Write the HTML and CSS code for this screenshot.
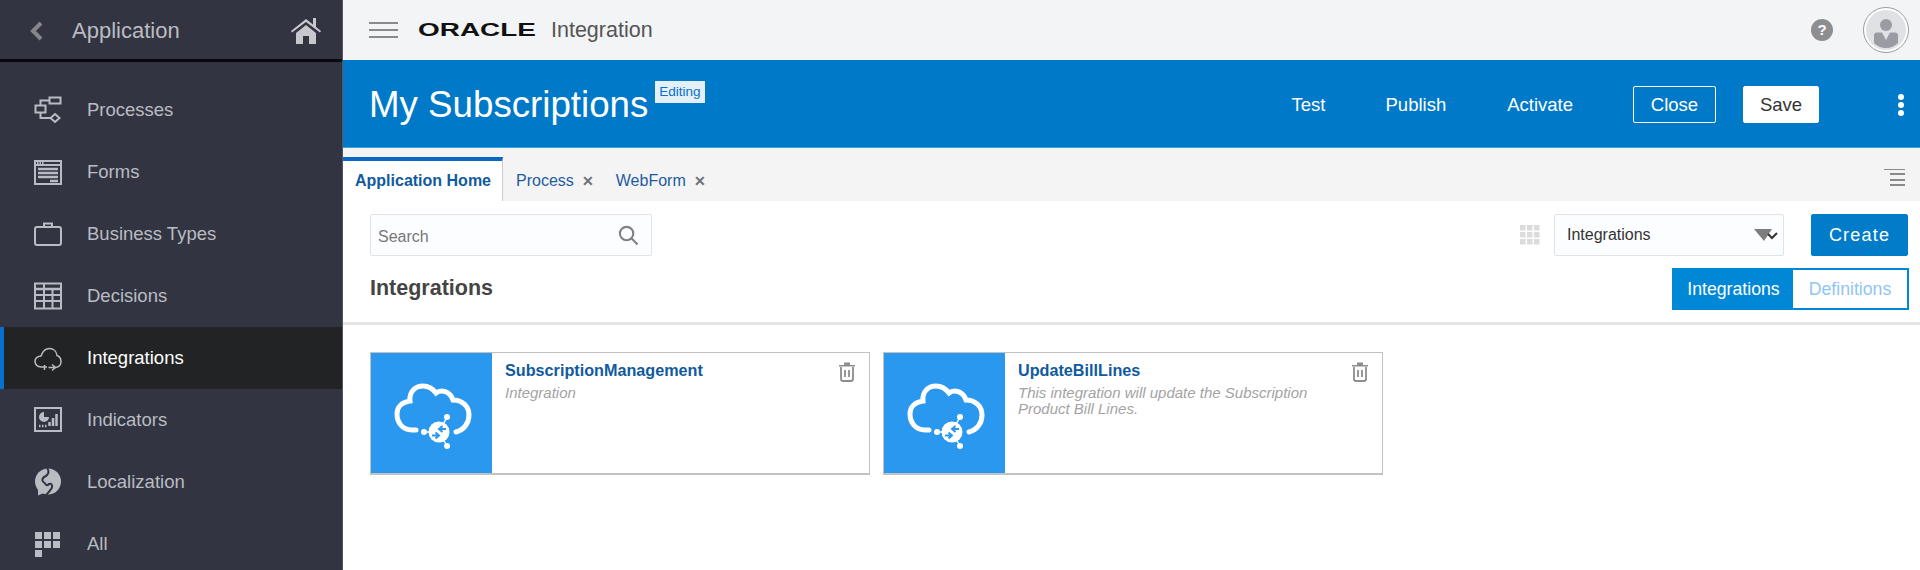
FILE: index.html
```html
<!DOCTYPE html>
<html lang="en">
<head>
    <meta charset="UTF-8">
    <title>My Subscriptions</title>
    <link rel="stylesheet" href="styles.css">
</head>
<body>
<div class="app">
    <aside class="sidebar">
        <div class="sidebar-head">
            <svg class="back" viewBox="0 0 14 20"><path d="M11 2 L3 10 L11 18" /></svg>
            <span class="sidebar-title">Application</span>
            <svg class="home" viewBox="0 0 30 27"><path d="M0 14 L15 2 L22 7.500 V1 H25 V10 L30 14 L29 15.500 L15 5 L1 15.500 Z" /><path d="M5 16 L15 8 L25 16 V27 H18 V19 H12 V27 H5 Z" /></svg>
        </div>
        <nav class="nav">
            <a class="nav-item">
                <svg class="nav-icon line" viewBox="0 0 28 28"><rect x="15.500" y="1.500" width="11" height="6" /><rect x="1.500" y="9.500" width="10" height="7" /><path d="M15.500 4.500 H6.500 V9.500 M6.500 16.500 V22 H16" /><path d="M21 18 L25.500 22 L21 26 L16.500 22 Z" /></svg>
                Processes
            </a>
            <a class="nav-item">
                <svg class="nav-icon line" viewBox="0 0 28 28"><rect x="1" y="3" width="26" height="23" /><path d="M1 7 H27" /><path d="M3 5 H10" stroke-dasharray="1.500 1" /><path class="thick" d="M4 11 H24 M4 15 H24 M4 19 H24 M16 23 H24" /></svg>
                Forms
            </a>
            <a class="nav-item">
                <svg class="nav-icon line" viewBox="0 0 28 28"><rect x="1" y="7" width="26" height="18" rx="2" /><path d="M10 7 V3.500 H18 V7" /></svg>
                Business Types
            </a>
            <a class="nav-item">
                <svg class="nav-icon line" viewBox="0 0 28 28"><rect x="1" y="1.500" width="26" height="25" /><path class="thick" d="M1 7 H27" /><path d="M1 13 H27 M1 19 H27 M10 1.500 V26.500 M18.500 7 V26.500" /></svg>
                Decisions
            </a>
            <a class="nav-item active">
                <svg class="nav-icon line thin" viewBox="0 0 28 28"><path d="M7 23 C3.500 23 1 20.500 1 17.500 C1 14.500 3.500 12.500 7 12 C8.500 7.500 11.500 4.500 15.500 4.500 C19.500 4.500 22.500 7.500 23 11.500 C25.500 12.500 27 15 27 17.500 C27 20.500 25 23 21.500 23.500" /><path d="M7 23 H13 M10.500 21 V26 M14.500 23.500 H21 M18 20.500 L21.500 23.500 L18 26.500" /></svg>
                Integrations
            </a>
            <a class="nav-item">
                <svg class="nav-icon line" viewBox="0 0 28 28"><rect x="1" y="2" width="26" height="23" /><path class="solid" d="M10 6 A5 5 0 1 0 15 11 H10 Z" /><path class="thick" d="M5 20 H6.500 M8 20 H9.500 M11 20 H12.500 M15.500 20 V16 M19 20 V12 M22.500 20 V8" /></svg>
                Indicators
            </a>
            <a class="nav-item">
                <svg class="nav-icon" viewBox="0 0 28 28"><circle cx="14" cy="13.500" r="13" /><path d="M4 20 L4 27.500 L12 24 Z" /><path class="gap" d="M13 0 C16 4 14 7 11 8.500 C8 10 7.500 13 10 14.500 C12 16 12.500 19 15 16 C18 14.500 19 19 17 21 C16 23 14 25 12 27" /></svg>
                Localization
            </a>
            <a class="nav-item">
                <svg class="nav-icon" viewBox="0 0 28 28"><rect x="1" y="2" width="7" height="7" /><rect x="10" y="2" width="7" height="7" /><rect x="19" y="2" width="7" height="7" /><rect x="1" y="11" width="7" height="7" /><rect x="10" y="11" width="7" height="7" /><rect x="19" y="11" width="7" height="7" /><rect x="1" y="20" width="7" height="7" /></svg>
                All
            </a>
        </nav>
    </aside>

    <main class="main">
        <header class="topbar">
            <div class="burger"><span></span><span></span><span></span></div>
            <span class="logo">ORACLE</span>
            <span class="product">Integration</span>
            <span class="help">?</span>
            <div class="avatar">
                <svg viewBox="0 0 46 46"><circle cx="23" cy="23" r="22.500" fill="#fff" stroke="#9a9a9a" /><circle cx="23" cy="23" r="20" fill="#dfe1e5" /><circle cx="23" cy="18" r="6" fill="#9a9ba3" /><path d="M11 28 Q11 26 14 25.500 L19 25.500 L23 33 L27 25.500 L32 25.500 Q35 26 35 28 V36 Q30 41 23 41 Q16 41 11 36 Z" fill="#9a9ba3" /></svg>
            </div>
        </header>

        <section class="band">
            <h1 class="page-title">My Subscriptions</h1>
            <span class="badge">Editing</span>
            <div class="actions">
                <a class="action">Test</a>
                <a class="action">Publish</a>
                <a class="action">Activate</a>
                <button class="btn-close">Close</button>
                <button class="btn-save">Save</button>
                <div class="dots"><span></span><span></span><span></span></div>
            </div>
        </section>

        <div class="tabs">
            <a class="tab tab-active">Application Home</a>
            <a class="tab">Process <i class="tab-x">&#10005;</i></a>
            <a class="tab">WebForm <i class="tab-x">&#10005;</i></a>
            <div class="tabs-menu"><span></span><span></span><span></span><span></span></div>
        </div>

        <section class="panel">
            <div class="toolbar">
                <div class="search">
                    <span>Search</span>
                    <svg viewBox="0 0 22 22"><circle cx="9" cy="9" r="7" /><path d="M14 14 L20.500 20.500" /></svg>
                </div>
                <div class="toolbar-right">
                    <svg class="grid-icon" viewBox="0 0 20 20"><path d="M0 0h5.500v5.500H0z M7 0h5.500v5.500H7z M14 0h5.500v5.500H14z M0 7h5.500v5.500H0z M7 7h5.500v5.500H7z M14 7h5.500v5.500H14z M0 14h5.500v5.500H0z M7 14h5.500v5.500H7z M14 14h5.500v5.500H14z" /></svg>
                    <div class="select">
                        <span>Integrations</span>
                        <svg viewBox="0 0 24 14"><path d="M0 1 H18 L10 13 Z" fill="#7d7d7d" /><path d="M14 6 L18 10 L23 5" fill="none" stroke="#333" stroke-width="2" /></svg>
                    </div>
                    <button class="btn-create">Create</button>
                </div>
            </div>
            <div class="section-row">
                <h2 class="section-title">Integrations</h2>
                <div class="toggle">
                    <span class="toggle-on">Integrations</span>
                    <span class="toggle-off">Definitions</span>
                </div>
            </div>
        </section>

        <section class="cards">
            <article class="card">
                <div class="card-icon">
                    <svg viewBox="-11 -27 121 121"><path class="cloud" d="M34 50 H30 C20 50 15 42 15 34 C15 27 20 22 28 21 C27 12 33 6 41 6 C47 6 51 9 54 13 C59 9 68 11 71 20 C80 20 87 26 87 35 C87 43 82 50 74 52" /><path class="spoke" d="M42 52 H50 M65 37 L57 52 L65 66" /><circle class="node" cx="57" cy="52" r="10.500" /><circle class="node" cx="42" cy="52" r="3" /><circle class="node" cx="65" cy="37" r="3" /><circle class="node" cx="65" cy="66" r="3" /><path class="arrow" d="M64 49 H58 M60.500 46 L57 49 L60.500 52 M50 55.500 H56 M53.500 52.500 L57 55.500 L53.500 58.500" /></svg>
                </div>
                <div class="card-body">
                    <h3 class="card-title">SubscriptionManagement</h3>
                    <p class="card-desc">Integration</p>
                </div>
                <svg class="trash" viewBox="0 0 18 21"><path d="M1 4 H17 V5.500 H1 Z M6 4 V1.500 H12 V4 Z" class="lid" /><path d="M3 6 V18 Q3 20 5 20 H13 Q15 20 15 18 V6 M7 9 V16 M11 9 V16" /></svg>
            </article>
            <article class="card">
                <div class="card-icon">
                    <svg viewBox="-11 -27 121 121"><path class="cloud" d="M34 50 H30 C20 50 15 42 15 34 C15 27 20 22 28 21 C27 12 33 6 41 6 C47 6 51 9 54 13 C59 9 68 11 71 20 C80 20 87 26 87 35 C87 43 82 50 74 52" /><path class="spoke" d="M42 52 H50 M65 37 L57 52 L65 66" /><circle class="node" cx="57" cy="52" r="10.500" /><circle class="node" cx="42" cy="52" r="3" /><circle class="node" cx="65" cy="37" r="3" /><circle class="node" cx="65" cy="66" r="3" /><path class="arrow" d="M64 49 H58 M60.500 46 L57 49 L60.500 52 M50 55.500 H56 M53.500 52.500 L57 55.500 L53.500 58.500" /></svg>
                </div>
                <div class="card-body">
                    <h3 class="card-title">UpdateBillLines</h3>
                    <p class="card-desc">This integration will update the Subscription Product Bill Lines.</p>
                </div>
                <svg class="trash" viewBox="0 0 18 21"><path d="M1 4 H17 V5.500 H1 Z M6 4 V1.500 H12 V4 Z" class="lid" /><path d="M3 6 V18 Q3 20 5 20 H13 Q15 20 15 18 V6 M7 9 V16 M11 9 V16" /></svg>
            </article>
        </section>
    </main>
</div>
</body>
</html>
```

FILE: styles.css
```css
* {
    box-sizing: border-box;
}

html, body {
    margin: 0;
    height: 100%;
    overflow: hidden;
    font-family: "Liberation Sans", Arial, sans-serif;
    background-color: #fff;
}

.app {
    display: flex;
    height: 570px;
}

/* sidebar */
.sidebar {
    width: 343px;
    flex-shrink: 0;
    background-color: #323441;
    border-right: 1px solid #55565f;
    color: #b9bcc2;
}

.sidebar-head {
    display: flex;
    align-items: center;
    height: 62px;
    padding: 2px 21px 0 30px;
    border-bottom: 3px solid #08090c;
}

.back {
    width: 14px;
    height: 20px;
    fill: none;
    stroke: #85868c;
    stroke-width: 4;
}

.sidebar-title {
    flex-grow: 1;
    margin-left: 28px;
    font-size: 22px;
    color: #babcc2;
}

.home {
    width: 30px;
    height: 27px;
    fill: #c6c8cd;
}

.nav {
    padding-top: 17px;
}

.nav-item {
    display: flex;
    align-items: center;
    height: 62px;
    padding-left: 34px;
    font-size: 18.500px;
}

.nav-item.active {
    background-color: #222324;
    color: #fff;
    border-left: 4px solid #0572ce;
    padding-left: 30px;
}

.nav-icon {
    width: 28px;
    height: 28px;
    margin-right: 25px;
    fill: #b9bcc2;
}

.nav-icon.line {
    fill: none;
    stroke: #b9bcc2;
    stroke-width: 2;
}

.nav-icon.thin {
    stroke-width: 1.500;
}

.nav-icon .thick {
    stroke-width: 2.500;
}

.nav-icon .solid {
    fill: #b9bcc2;
    stroke: none;
}

.nav-icon .gap {
    fill: none;
    stroke: #323441;
    stroke-width: 2;
}

/* top bar */
.main {
    flex-grow: 1;
    min-width: 0;
}

.topbar {
    display: flex;
    align-items: center;
    height: 60px;
    padding: 0 11px 0 26px;
    background-color: #f3f4f6;
}

.burger {
    display: flex;
    flex-direction: column;
    gap: 5px;
    width: 29px;
}

.burger span {
    height: 2px;
    background-color: #8b8b8b;
}

.logo {
    width: 119px;
    margin-left: 20px;
    font-size: 19px;
    font-weight: 700;
    color: #111;
    transform: scaleX(1.470);
    transform-origin: left center;
}

.product {
    flex-grow: 1;
    margin-left: 14px;
    font-size: 21.500px;
    color: #555;
}

.help {
    width: 22px;
    height: 22px;
    border-radius: 50%;
    background-color: #8e8e92;
    color: #fff;
    font-size: 15px;
    font-weight: 700;
    line-height: 22px;
    text-align: center;
}

.avatar {
    width: 46px;
    height: 46px;
    margin-left: 30px;
}

/* blue band */
.band {
    display: flex;
    align-items: center;
    height: 88px;
    padding: 2px 16px 0 26px;
    background-color: #0079c8;
    border-bottom: 1px solid #3aa0e0;
    color: #fff;
}

.page-title {
    margin: 0;
    font-size: 36.700px;
    font-weight: 400;
}

.badge {
    align-self: flex-start;
    margin: 19px 0 0 7px;
    padding: 0 4px;
    height: 22px;
    background-color: #e4eff8;
    color: #0572ce;
    font-size: 13.500px;
    line-height: 22px;
}

.actions {
    display: flex;
    align-items: center;
    margin-left: auto;
    font-size: 18.500px;
}

.action {
    margin-right: 60px;
}

.action:nth-child(2) {
    margin-right: 61px;
}

.btn-close, .btn-save {
    width: 83px;
    height: 37px;
    padding: 0;
    border-radius: 2px;
    font-family: inherit;
    font-size: 18.500px;
}

.btn-close {
    background-color: transparent;
    border: 1px solid #fff;
    color: #fff;
}

.btn-save {
    width: 76px;
    margin-left: 27px;
    background-color: #fff;
    border: 1px solid #fff;
    color: #333;
}

.dots {
    display: flex;
    flex-direction: column;
    gap: 2px;
    margin-left: 79px;
}

.dots span {
    width: 6px;
    height: 6px;
    border-radius: 50%;
    background-color: #fff;
}

/* tabs */
.tabs {
    display: flex;
    align-items: flex-end;
    height: 53px;
    padding-right: 15px;
    background-color: #f4f4f5;
}

.tab {
    display: flex;
    align-items: center;
    height: 40px;
    margin-left: 13px;
    font-size: 16px;
    color: #1f5c9e;
}

.tab:nth-child(3) {
    margin-left: 22px;
}

.tab-active {
    width: 160px;
    height: 44px;
    margin-left: 0;
    padding-left: 12px;
    background-color: #fff;
    border-top: 4px solid #0a68c4;
    border-right: 1px solid #c9cbd0;
    font-weight: 700;
    color: #115a9e;
}

.tab-x {
    margin-left: 8px;
    font-size: 14px;
    font-style: normal;
    font-weight: 700;
    color: #6f7175;
}

.tabs-menu {
    display: flex;
    flex-direction: column;
    align-items: flex-end;
    gap: 3.500px;
    width: 21px;
    margin: 0 0 15px auto;
}

.tabs-menu span {
    width: 15px;
    height: 2px;
    background-color: #8b8b8b;
}

.tabs-menu span:first-child {
    width: 21px;
    height: 1px;
}

/* toolbar */
.panel {
    padding: 13px 12px 0 27px;
    border-bottom: 3px solid #e5e5e5;
    height: 124px;
}

.toolbar, .section-row {
    display: flex;
    align-items: center;
    justify-content: space-between;
}

.search {
    display: flex;
    align-items: center;
    justify-content: space-between;
    width: 282px;
    height: 42px;
    padding: 0 12px 0 7px;
    background-color: #fcfdfe;
    border: 1px solid #dfe4ea;
    border-radius: 2px;
    color: #777;
    font-size: 16px;
}

.search span {
    padding-top: 3px;
}

.search svg {
    width: 21px;
    height: 21px;
    fill: none;
    stroke: #808080;
    stroke-width: 2.200;
}

.toolbar-right {
    display: flex;
    align-items: center;
}

.grid-icon {
    width: 20px;
    height: 20px;
    fill: #dcdcdc;
}

.select {
    display: flex;
    align-items: center;
    justify-content: space-between;
    width: 230px;
    height: 42px;
    margin-left: 14px;
    padding: 0 5px 0 12px;
    background-color: #fcfdfe;
    border: 1px solid #dfe4ea;
    border-radius: 2px;
    color: #333;
    font-size: 16px;
}

.select svg {
    width: 24px;
    height: 14px;
}

.btn-create {
    width: 97px;
    height: 42px;
    margin-left: 27px;
    padding: 0;
    background-color: #007cc8;
    border: 1px solid #007cc8;
    border-radius: 2px;
    color: #fff;
    font-family: inherit;
    font-size: 18px;
    letter-spacing: 1.200px;
}

.section-row {
    margin-top: 12px;
    margin-right: -1px;
}

.section-title {
    margin: 0 0 2px;
    font-size: 21.500px;
    font-weight: 700;
    color: #444;
}

.toggle {
    display: flex;
    width: 237px;
    height: 42px;
    border: 2px solid #0087d5;
    font-size: 17.700px;
    line-height: 38px;
    text-align: center;
}

.toggle-on {
    width: 119px;
    background-color: #0087d5;
    color: #fff;
}

.toggle-off {
    flex-grow: 1;
    color: #8fc6f5;
}

/* cards */
.cards {
    display: flex;
    gap: 13px;
    padding: 27px 0 0 27px;
}

.card {
    display: flex;
    position: relative;
    width: 500px;
    height: 123px;
    border: 1px solid #c2c2c2;
    border-bottom-width: 2px;
}

.card-icon {
    width: 121px;
    height: 120px;
    background-color: #2b98f0;
}

.card-icon svg {
    display: block;
    width: 121px;
    height: 121px;
}

.cloud {
    fill: none;
    stroke: #fff;
    stroke-width: 5;
    stroke-linecap: round;
}

.spoke {
    fill: none;
    stroke: #fff;
    stroke-width: 1.500;
}

.node {
    fill: #fff;
}

.arrow {
    fill: none;
    stroke: #2b98f0;
    stroke-width: 2;
}

.card-body {
    width: 330px;
    padding: 8px 0 0 13px;
}

.card-title {
    margin: 0;
    font-size: 16.200px;
    font-weight: 700;
    color: #115a9e;
}

.card-desc {
    margin: 5px 0 0;
    font-size: 15px;
    font-style: italic;
    line-height: 16px;
    color: #a3a3a3;
}

.trash {
    position: absolute;
    top: 8px;
    right: 13px;
    width: 18px;
    height: 21px;
    fill: none;
    stroke: #8d8d8d;
    stroke-width: 1.800;
}

.trash .lid {
    fill: #8d8d8d;
    stroke: none;
}
```
